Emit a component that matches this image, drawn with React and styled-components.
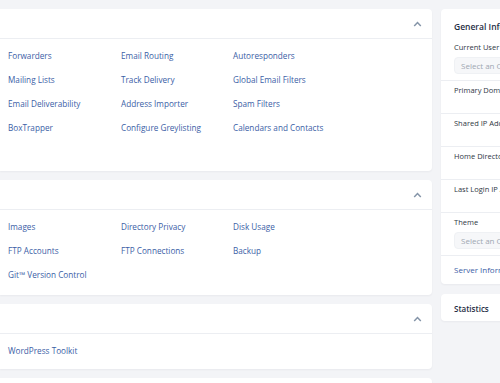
import React from "react";
import styled, { createGlobalStyle } from "styled-components";

const GlobalStyle = createGlobalStyle`
  html, body {
    margin: 0;
    padding: 0;
    background: #f3f4f7;
    overflow: hidden;
    font-family: "Open Sans", "Liberation Sans", sans-serif;
  }
`;

const sections = [
  {
    extra: 32,
    links: [
      "Forwarders",
      "Email Routing",
      "Autoresponders",
      "Mailing Lists",
      "Track Delivery",
      "Global Email Filters",
      "Email Deliverability",
      "Address Importer",
      "Spam Filters",
      "BoxTrapper",
      "Configure Greylisting",
      "Calendars and Contacts",
    ],
  },
  {
    extra: 9,
    links: [
      "Images",
      "Directory Privacy",
      "Disk Usage",
      "FTP Accounts",
      "FTP Connections",
      "Backup",
      "Git™ Version Control",
    ],
  },
  {
    extra: 7,
    links: ["WordPress Toolkit"],
  },
  { extra: 8, links: [] },
];

const infoRows = [
  { label: "Current User", select: true },
  { label: "Primary Domain" },
  { label: "Shared IP Address" },
  { label: "Home Directory" },
  { label: "Last Login IP Address" },
  { label: "Theme", select: true },
];

const Chevron = () => (
  <svg width="9" height="6" viewBox="0 0 9 6">
    <path d="M1.2 5 L4.5 1.6 L7.8 5" fill="none" stroke="#8494a8" strokeWidth="1.5" />
  </svg>
);

export default function App() {
  return (
    <>
      <GlobalStyle />
      <Page>
        <LeftColumn>
          {sections.map((s, i) => (
            <Card key={i}>
              <CardHeader>
                <Chevron />
              </CardHeader>
              <LinkGrid $extra={s.extra}>
                {s.links.map((l) => (
                  <LinkItem key={l}>{l}</LinkItem>
                ))}
              </LinkGrid>
            </Card>
          ))}
        </LeftColumn>
        <RightColumn>
          <SideCard>
            <SideTitle>General Information</SideTitle>
            {infoRows.map((r, i) => (
              <InfoRow key={r.label} $select={r.select} $first={i === 0}>
                <InfoLabel>{r.label}</InfoLabel>
                {r.select && <FakeSelect>Select an Option</FakeSelect>}
              </InfoRow>
            ))}
            <ServerLink>Server Information</ServerLink>
          </SideCard>
          <SideCard>
            <StatsTitle>Statistics</StatsTitle>
          </SideCard>
        </RightColumn>
      </Page>
    </>
  );
}

const Page = styled.div`
  display: flex;
  gap: 9px;
  padding-top: 9px;
  width: 700px;
`;

const LeftColumn = styled.div`
  width: 432px;
  flex-shrink: 0;
  display: flex;
  flex-direction: column;
  gap: 9px;
`;

const Card = styled.div`
  background: #ffffff;
  border-radius: 0 4px 4px 0;
  box-shadow: 0 1px 2px rgba(30, 40, 60, 0.05);
`;

const CardHeader = styled.div`
  height: 30px;
  display: flex;
  align-items: center;
  justify-content: flex-end;
  padding-right: 10px;
  border-bottom: 1px solid #eceef2;
  box-sizing: border-box;
`;

const LinkGrid = styled.div`
  display: grid;
  grid-template-columns: 113px 112px 112px;
  grid-auto-rows: 24px;
  padding: 4px 0 ${(p) => p.$extra}px 8px;
`;

const LinkItem = styled.a`
  font-size: 8.2px;
  color: #3b60a6;
  display: flex;
  align-items: center;
  white-space: nowrap;
  cursor: pointer;
`;

const RightColumn = styled.div`
  width: 200px;
  display: flex;
  flex-direction: column;
  gap: 10px;
`;

const SideCard = styled.div`
  background: #ffffff;
  border-radius: 4px;
  box-shadow: 0 1px 2px rgba(30, 40, 60, 0.05);
`;

const SideTitle = styled.div`
  font-size: 8.5px;
  line-height: 12px;
  font-weight: 600;
  color: #1f2e44;
  padding: 12px 13px 3px;
  white-space: nowrap;
`;

const InfoRow = styled.div`
  padding: ${(p) => (p.$first ? "6px" : "4px")} 13px ${(p) => (p.$select ? "6px" : "0")};
  height: ${(p) => (p.$select ? "auto" : "33px")};
  box-sizing: border-box;
  border-bottom: 1px solid #eceef2;
`;

const InfoLabel = styled.div`
  font-size: 7.5px;
  font-weight: 500;
  color: #2f3845;
  line-height: 11px;
  white-space: nowrap;
`;

const FakeSelect = styled.div`
  margin-top: 4px;
  height: 17px;
  box-sizing: border-box;
  background: #f6f7f9;
  border: 1px solid #eff1f4;
  border-radius: 4px;
  font-size: 8px;
  color: #a0a7b2;
  display: flex;
  align-items: center;
  padding-left: 6px;
  white-space: nowrap;
`;

const ServerLink = styled.div`
  font-size: 8px;
  line-height: 11px;
  color: #3b60a6;
  padding: 8px 13px 9px;
  white-space: nowrap;
`;

const StatsTitle = styled.div`
  font-size: 8px;
  line-height: 11px;
  font-weight: 600;
  color: #1f2e44;
  padding: 9px 13px 7px;
`;
